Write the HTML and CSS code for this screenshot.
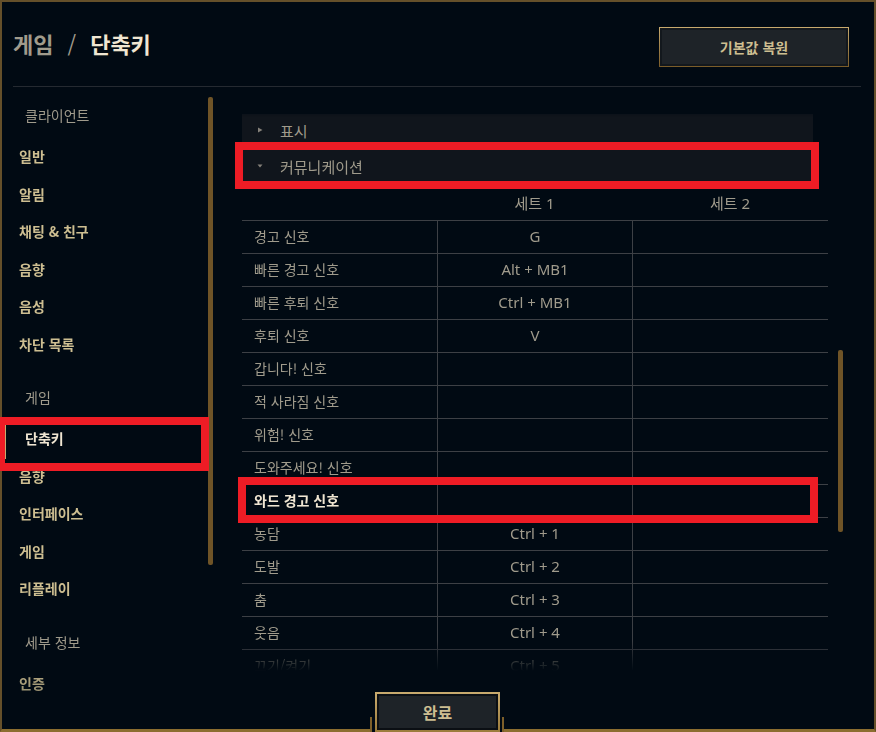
FILE: index.html
```html
<!DOCTYPE html>
<html lang="ko">
<head>
<meta charset="utf-8">
<title>게임 / 단축키</title>
<link rel="stylesheet" href="styles.css">
</head>
<body>
<div class="frame">
  <header class="top">
    <h1 class="title"><span class="crumb">게임</span><span class="sep">/</span><span class="current">단축키</span></h1>
    <button class="btn-restore">기본값 복원</button>
  </header>
  <div class="divider"></div>
  <div class="main">
    <nav class="sidebar">
      <div class="nav-list">
        <div class="nav-head">클라이언트</div>
        <div class="nav-item">일반</div>
        <div class="nav-item">알림</div>
        <div class="nav-item">채팅 &amp; 친구</div>
        <div class="nav-item">음향</div>
        <div class="nav-item">음성</div>
        <div class="nav-item">차단 목록</div>
        <div class="nav-head">게임</div>
        <div class="nav-item active">단축키</div>
        <div class="nav-item">음향</div>
        <div class="nav-item">인터페이스</div>
        <div class="nav-item">게임</div>
        <div class="nav-item">리플레이</div>
        <div class="nav-head">세부 정보</div>
        <div class="nav-item">인증</div>
      </div>
      <div class="track side-track"><div class="thumb"></div></div>
    </nav>
    <section class="content">
      <div class="scroll">
        <div class="group">
          <svg class="caret" width="8" height="8" viewBox="0 0 8 8"><polygon points="2,1.5 6.5,4 2,6.5" fill="#85817a"/></svg>
          <span>표시</span>
        </div>
        <div class="group">
          <svg class="caret" width="8" height="8" viewBox="0 0 8 8"><polygon points="1.5,2.5 6.5,2.5 4,5.5" fill="#85817a"/></svg>
          <span>커뮤니케이션</span>
        </div>
        <div class="table">
          <div class="thead"><div class="h"></div><div class="h">세트 1</div><div class="h">세트 2</div></div>
          <div class="row"><div class="c name">경고 신호</div><div class="c key">G</div><div class="c key"></div></div>
          <div class="row"><div class="c name">빠른 경고 신호</div><div class="c key">Alt + MB1</div><div class="c key"></div></div>
          <div class="row"><div class="c name">빠른 후퇴 신호</div><div class="c key">Ctrl + MB1</div><div class="c key"></div></div>
          <div class="row"><div class="c name">후퇴 신호</div><div class="c key">V</div><div class="c key"></div></div>
          <div class="row"><div class="c name">갑니다! 신호</div><div class="c key"></div><div class="c key"></div></div>
          <div class="row"><div class="c name">적 사라짐 신호</div><div class="c key"></div><div class="c key"></div></div>
          <div class="row"><div class="c name">위험! 신호</div><div class="c key"></div><div class="c key"></div></div>
          <div class="row"><div class="c name">도와주세요! 신호</div><div class="c key"></div><div class="c key"></div></div>
          <div class="row selected"><div class="c name">와드 경고 신호</div><div class="c key"></div><div class="c key"></div></div>
          <div class="row"><div class="c name">농담</div><div class="c key">Ctrl + 1</div><div class="c key"></div></div>
          <div class="row"><div class="c name">도발</div><div class="c key">Ctrl + 2</div><div class="c key"></div></div>
          <div class="row"><div class="c name">춤</div><div class="c key">Ctrl + 3</div><div class="c key"></div></div>
          <div class="row"><div class="c name">웃음</div><div class="c key">Ctrl + 4</div><div class="c key"></div></div>
          <div class="row"><div class="c name">끄기/켜기</div><div class="c key">Ctrl + 5</div><div class="c key"></div></div>
        </div>
      </div>
      <div class="track content-track"><div class="thumb"></div></div>
    </section>
  </div>
  <div class="footer">
    <span class="deco"></span>
    <button class="btn-done">완료</button>
    <span class="deco"></span>
  </div>
</div>
<div class="mark mark-nav"></div>
<div class="mark mark-group"></div>
<div class="mark mark-row"></div>
</body>
</html>
```
FILE: styles.css
```css
html, body {
  margin: 0;
  background: #010a13;
}
body {
  width: 876px;
  height: 732px;
  position: relative;
  overflow: hidden;
  font-family: "Noto Sans", "Noto Sans CJK KR", sans-serif;
}
.frame {
  box-sizing: border-box;
  width: 876px;
  height: 732px;
  border: 2px solid #65502a;
  border-bottom: 3px solid #8c6e30;
  background: #010a13;
  display: flex;
  flex-direction: column;
  position: relative;
}
.top {
  height: 84px;
  box-sizing: border-box;
  padding: 25px 25px 0 11px;
  display: flex;
  justify-content: space-between;
  align-items: flex-start;
}
.title {
  margin: 0;
  font-family: "Noto Sans CJK KR", sans-serif;
  font-size: 22px;
  font-weight: 700;
  line-height: 32px;
  color: #f0e6d2;
  display: flex;
}
.crumb { color: #a09b8c; }
.sep { color: #a09b8c; margin: 0 14px; font-weight: 400; }
.btn-restore {
  width: 190px;
  height: 40px;
  box-sizing: border-box;
  border: 1px solid;
  border-image: linear-gradient(#c8aa6e, #7a5c29) 1;
  background: #1e2328;
  box-shadow: inset 0 0 0 2px #13181d;
  color: #cdbe91;
  font-family: "Noto Sans CJK KR", sans-serif;
  font-size: 14px;
  font-weight: 700;
  padding: 0;
}
.divider {
  height: 1px;
  background: #252a31;
  margin: 0 13px 0 11px;
}
.main {
  flex: 1;
  display: flex;
  min-height: 0;
}
.sidebar {
  width: 211px;
  display: flex;
}
.nav-list {
  flex: 1;
  padding-top: 16px;
  overflow: hidden;
  font-family: "Noto Sans CJK KR", sans-serif;
  -webkit-mask-image: linear-gradient(#000 calc(100% - 70px), rgba(0,0,0,0.45) 100%);
  mask-image: linear-gradient(#000 calc(100% - 70px), rgba(0,0,0,0.45) 100%);
}
.nav-head {
  height: 24px;
  line-height: 24px;
  padding-left: 23px;
  font-size: 14px;
  color: #a09b8c;
  margin: 22px 0 11px;
}
.nav-head:first-child { margin-top: 0; }
.nav-item {
  height: 37.5px;
  line-height: 37.5px;
  padding-left: 17px;
  font-size: 14px;
  font-weight: 700;
  color: #cdbe91;
  white-space: nowrap;
}
.nav-item.active {
  color: #f0e6d2;
  padding-left: 23px;
  position: relative;
}
.nav-item.active::before {
  content: "";
  position: absolute;
  left: 3px;
  top: 3px;
  width: 1px;
  height: 36px;
  background: #c8aa6e;
}
.track { width: 5px; flex: none; }
.thumb {
  background: #6f5427;
  border-radius: 2px;
}
.side-track .thumb { margin-top: 10px; height: 468px; }
.content-track .thumb { margin-top: 244px; height: 182px; }

.content {
  flex: 1;
  display: flex;
  gap: 10px;
  padding: 19px 0 58px 29px;
  min-height: 0;
}
.scroll {
  width: 586px;
  box-sizing: border-box;
  padding-top: 8px;
  overflow: hidden;
  -webkit-mask-image: linear-gradient(transparent 0, #000 11px, #000 calc(100% - 30px), transparent 100%);
  mask-image: linear-gradient(transparent 0, #000 11px, #000 calc(100% - 30px), transparent 100%);
}
.group {
  height: 32px;
  margin: 0 15px 4px 0;
  background: #10151c;
  display: flex;
  align-items: center;
  padding-left: 14px;
  color: #a09b8c;
  font-family: "Noto Sans CJK KR", sans-serif;
  font-size: 15px;
}
.caret { margin-right: 16px; flex: none; }
.table { font-family: "Noto Sans", "Noto Sans CJK KR", sans-serif; }
.thead, .row {
  display: grid;
  grid-template-columns: 195px 195px 196px;
}
.thead {
  height: 34px;
  box-sizing: border-box;
  padding-top: 2px;
}
.h {
  line-height: 30px;
  text-align: center;
  font-size: 15px;
  color: #a09b8c;
}
.row {
  height: 33px;
  box-sizing: border-box;
  border-top: 1px solid #3d4045;
}
.c {
  line-height: 31px;
  color: #a09b8c;
  white-space: nowrap;
}
.name {
  padding-left: 12px;
  font-size: 14px;
  font-family: "Noto Sans CJK KR", sans-serif;
}
.key {
  border-left: 1px solid #3d4045;
  text-align: center;
  font-size: 15px;
}
.row.selected .name {
  color: #f0e6d2;
  font-weight: 700;
}

.footer {
  position: absolute;
  left: 368px;
  bottom: -3px;
  height: 40px;
  width: 134px;
  background: #010a13;
  display: flex;
  align-items: flex-end;
}
.deco {
  width: 2px;
  height: 15px;
  background: #7d5f2a;
  flex: none;
}
.btn-done {
  width: 125px;
  height: 40px;
  margin: 0 2px 0 3px;
  box-sizing: border-box;
  border: 2px solid;
  border-image: linear-gradient(#c8aa6e, #9c7c3c) 1;
  background: #1e2328;
  box-shadow: inset 0 0 0 2px #0b0f14;
  color: #cdbe91;
  font-family: "Noto Sans CJK KR", sans-serif;
  font-size: 16px;
  font-weight: 700;
  padding: 0;
}

.mark {
  position: absolute;
  box-sizing: border-box;
  border: 8px solid #ee1c25;
}
.mark-nav { left: -3px; top: 417px; width: 212px; height: 54px; }
.mark-group { left: 235px; top: 142px; width: 584px; height: 47px; }
.mark-row { left: 238px; top: 477px; width: 580px; height: 46px; }
```
